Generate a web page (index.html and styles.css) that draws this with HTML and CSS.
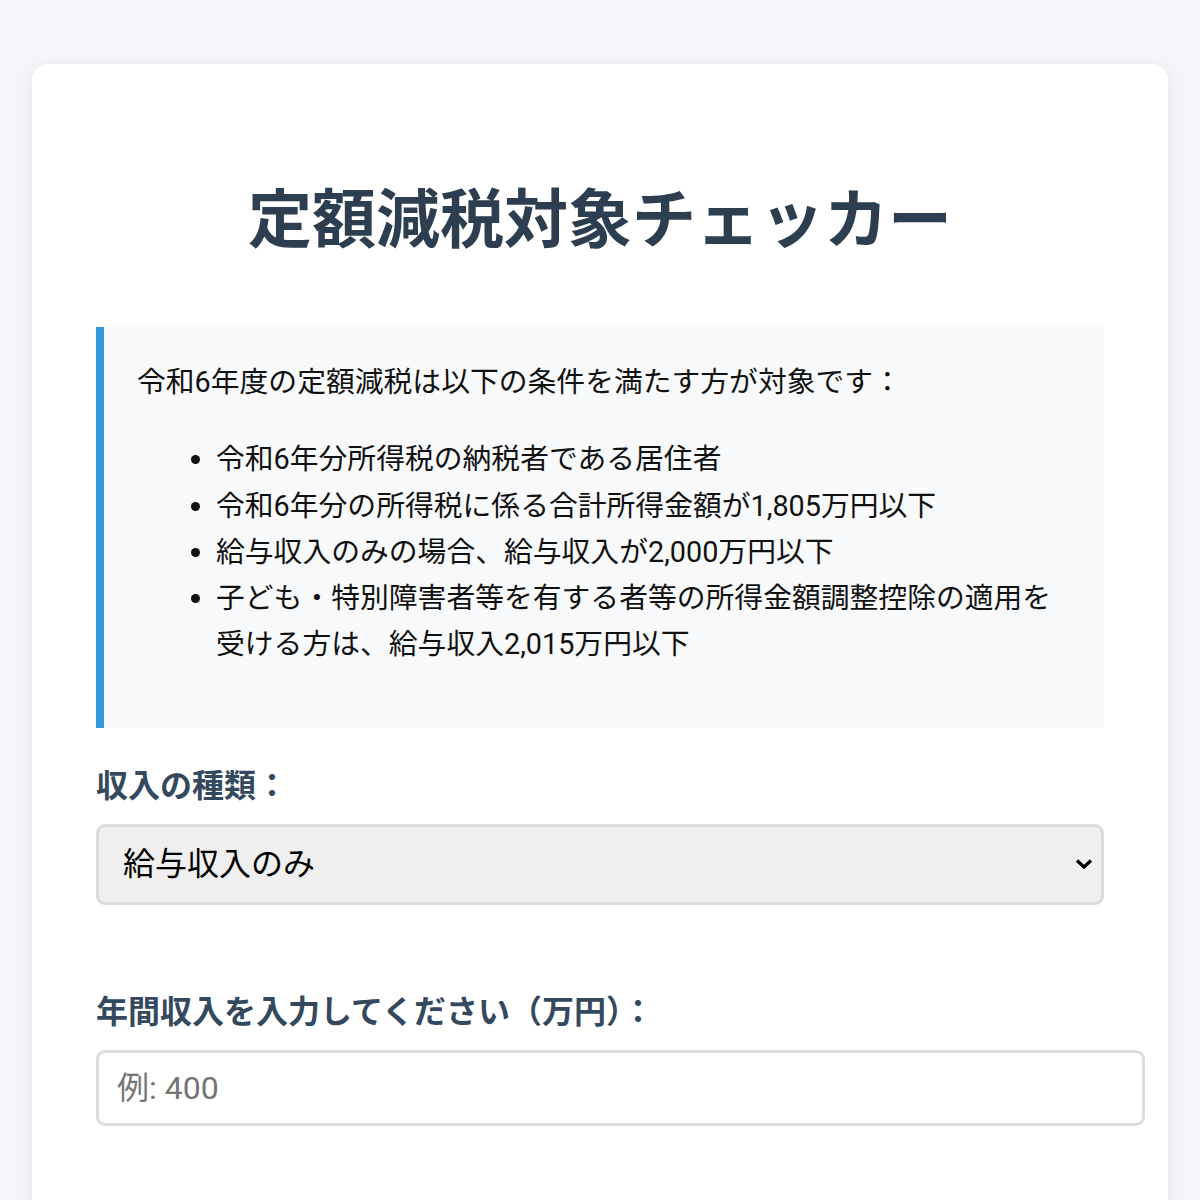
FILE: index.html
```html
<!DOCTYPE html>
<html lang="ja">
<head>
<meta charset="utf-8">
<title>定額減税対象チェッカー</title>
<link rel="stylesheet" href="styles.css">
</head>
<body>
<div class="card">
  <h1 class="title">定額減税対象チェッカー</h1>
  <div class="info">
    <p class="info-lead">令和6年度の定額減税は以下の条件を満たす方が対象です：</p>
    <ul class="info-list">
      <li>令和6年分所得税の納税者である居住者</li>
      <li>令和6年分の所得税に係る合計所得金額が1,805万円以下</li>
      <li>給与収入のみの場合、給与収入が2,000万円以下</li>
      <li>子ども・特別障害者等を有する者等の所得金額調整控除の適用を受ける方は、給与収入2,015万円以下</li>
    </ul>
  </div>
  <div class="group">
    <label class="label" for="type">収入の種類：</label>
    <div class="select-wrap">
      <select id="type" class="select">
        <option>給与収入のみ</option>
        <option>その他の収入あり</option>
      </select>
      <svg class="chevron" width="18" height="12" viewBox="0 0 18 12"><path d="M2 2.5 L9 9 L16 2.5" fill="none" stroke="#000" stroke-width="3.2"/></svg>
    </div>
  </div>
  <div class="group">
    <label class="label" for="income">年間収入を入力してください（万円）：</label>
    <input id="income" class="input" type="number" placeholder="例: 400">
  </div>
</div>
</body>
</html>
```

FILE: styles.css
```css
html, body {
  margin: 0;
  padding: 0;
  background: #f4f6f9;
}
body {
  padding: 64px 32px 0;
  font-family: Roboto, "Noto Sans CJK JP", sans-serif;
  font-size: 32px;
  line-height: 1.6;
  color: #222;
}
.card {
  background: #ffffff;
  border-radius: 16px;
  padding: 64px 64px 120px;
  box-shadow: 0 4px 20px rgba(0, 0, 0, 0.07);
}
.title {
  margin: 42px 0 55px;
  text-align: center;
  font-size: 64px;
  line-height: 1.6;
  font-weight: 700;
  color: #2c3e50;
}
.info {
  background: #f8f9fa;
  border-left: 8px solid #3498db;
  padding: 32px 32px 61px 33px;
  font-size: 28.8px;
  line-height: 1.6;
  color: #111;
  margin-bottom: 33px;
}
.info-lead {
  margin: 0;
}
.info-list {
  margin: 31px 0 0;
  padding-left: 79px;
}
.group {
  margin-bottom: 82px;
}
.label {
  display: block;
  font-weight: 700;
  color: #34495e;
  margin-bottom: 12px;
}
.select-wrap {
  position: relative;
}
.select {
  display: block;
  width: 100%;
  box-sizing: border-box;
  height: 81px;
  padding: 0 24px;
  font-family: Roboto, "Noto Sans CJK JP", sans-serif;
  font-size: 32px;
  color: #000;
  background: #efefef;
  border: 3px solid #dcdcdc;
  border-radius: 9px;
  appearance: none;
  -webkit-appearance: none;
}
.chevron {
  position: absolute;
  right: 11px;
  top: 34px;
}
.input {
  display: block;
  width: 100%;
  box-sizing: content-box;
  height: 38px;
  padding: 16px 17px 16px 18px;
  font-family: Roboto, "Noto Sans CJK JP", sans-serif;
  font-size: 32px;
  color: #000;
  background: #fff;
  border: 3px solid #dcdcdc;
  border-radius: 9px;
  margin: 0;
}
.input::placeholder {
  color: #757575;
}
```
